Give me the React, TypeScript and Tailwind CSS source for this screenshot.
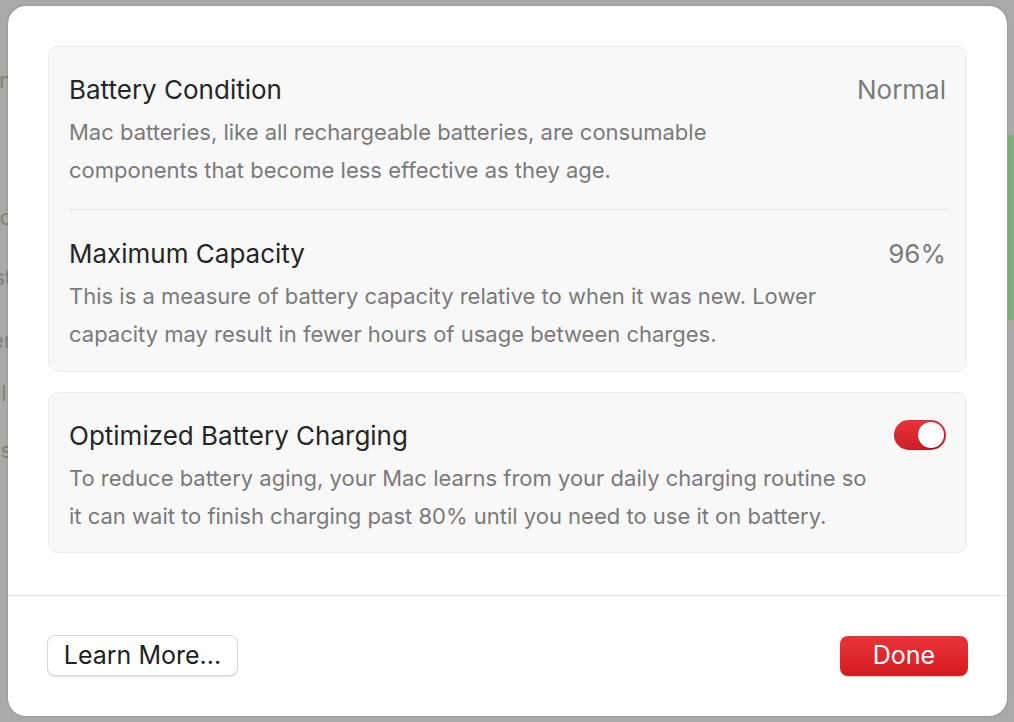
import React from "react";

function Toggle() {
  return (
    <div className="relative w-[52px] h-[30px] rounded-full bg-gradient-to-b from-[#e8343a] to-[#d01c24] shadow-[inset_0_0_0_1px_rgba(0,0,0,0.05)]">
      <div className="absolute right-[2px] top-[2px] w-[26px] h-[26px] rounded-full bg-white shadow-[0_1px_2px_rgba(0,0,0,0.3)]" />
    </div>
  );
}

function Row({ title, value, desc, right }: { title: string; value?: string; desc: string[]; right?: React.ReactNode }) {
  return (
    <div className="flex flex-col">
      <div className="flex items-center justify-between h-[30px]">
        <div className="text-[26px] text-[#262626]">{title}</div>
        {value && <div className="text-[26px] text-[#7b7b7b]">{value}</div>}
        {right}
      </div>
      <div className="mt-[9px] text-[22px] leading-[38px] text-[#7a7a7a]">
        {desc.map((d, i) => (
          <div key={i}>{d}</div>
        ))}
      </div>
    </div>
  );
}

const bgWords: { t: string; y: number }[] = [
  { t: "Scan", y: 66 },
  { t: "Mac", y: 203 },
  { t: "Last", y: 263 },
  { t: "Never", y: 326 },
  { t: "Full", y: 379 },
  { t: "Bus", y: 436 },
];

export default function App() {
  return (
    <div
      className="relative w-[1014px] h-[722px] bg-[#a9a9a7] overflow-hidden pt-[6px] pl-[8px]"
      style={{ fontFamily: "Inter, 'Noto Sans', sans-serif" }}
    >
      {bgWords.map((w) => (
        <div
          key={w.t}
          className="absolute left-[-60px] w-[72px] text-right text-[22px] leading-[28px] text-[#80807e]"
          style={{ top: w.y }}
        >
          {w.t}
        </div>
      ))}
      <div className="absolute right-0 top-[135px] w-[6px] h-[185px] bg-[#7fae7f]" />
      <div className="relative z-10 w-[999px] h-[710px] bg-white rounded-[18px] flex flex-col shadow-[0_0_2px_rgba(0,0,0,0.25)]">
        <div className="flex flex-col gap-[20px] px-[40px] pt-[40px]">
          <div className="rounded-[10px] bg-[#f8f8f8] border border-[#ececec] px-[20px] pt-[27px] pb-[18px] flex flex-col">
            <Row
              title="Battery Condition"
              value="Normal"
              desc={[
                "Mac batteries, like all rechargeable batteries, are consumable",
                "components that become less effective as they age.",
              ]}
            />
            <div className="h-px bg-[#e2e2e2] mt-[20px] mb-[28px]" />
            <Row
              title="Maximum Capacity"
              value="96%"
              desc={[
                "This is a measure of battery capacity relative to when it was new. Lower",
                "capacity may result in fewer hours of usage between charges.",
              ]}
            />
          </div>
          <div className="rounded-[10px] bg-[#f8f8f8] border border-[#ececec] px-[20px] pt-[27px] pb-[17px] flex flex-col">
            <Row
              title="Optimized Battery Charging"
              right={<Toggle />}
              desc={[
                "To reduce battery aging, your Mac learns from your daily charging routine so",
                "it can wait to finish charging past 80% until you need to use it on battery.",
              ]}
            />
          </div>
        </div>
        <div className="h-px bg-[#e3e3e3] mt-[42px]" />
        <div className="flex items-center justify-between px-[39px] pt-[39px]">
          <button className="h-[41px] w-[191px] rounded-[8px] bg-white border border-[#d6d6d6] shadow-[0_1px_1px_rgba(0,0,0,0.12)] text-[25px] text-[#222]">
            Learn More...
          </button>
          <button className="h-[40px] w-[128px] rounded-[8px] bg-gradient-to-b from-[#e8333a] to-[#d71a22] text-white text-[25px] shadow-[0_1px_1px_rgba(0,0,0,0.15)]">
            Done
          </button>
        </div>
      </div>
    </div>
  );
}
